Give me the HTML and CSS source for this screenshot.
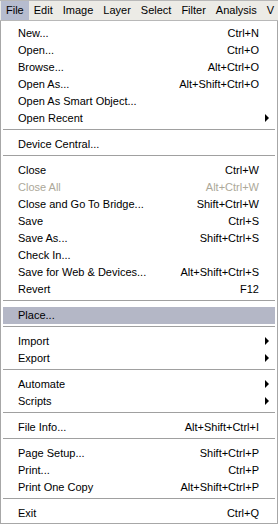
FILE: index.html
```html
<!DOCTYPE html>
<html lang="en">
  <head>
    <meta charset="UTF-8" />
    <title>File Menu</title>
    <link rel="stylesheet" href="styles.css">
  </head>
  <body>
    <div class="menubar">
      <span class="top-item open">File</span>
      <span class="top-item">Edit</span>
      <span class="top-item">Image</span>
      <span class="top-item">Layer</span>
      <span class="top-item">Select</span>
      <span class="top-item">Filter</span>
      <span class="top-item">Analysis</span>
      <span class="top-item">V</span>
    </div>

    <div class="menu">
      <div class="item"><span>New...</span><span class="key">Ctrl+N</span><span class="sub"></span></div>
      <div class="item"><span>Open...</span><span class="key">Ctrl+O</span><span class="sub"></span></div>
      <div class="item"><span>Browse...</span><span class="key">Alt+Ctrl+O</span><span class="sub"></span></div>
      <div class="item"><span>Open As...</span><span class="key">Alt+Shift+Ctrl+O</span><span class="sub"></span></div>
      <div class="item"><span>Open As Smart Object...</span><span class="key"></span><span class="sub"></span></div>
      <div class="item"><span>Open Recent</span><span class="key"></span><span class="sub arrow"></span></div>
      <div class="sep"></div>
      <div class="item"><span>Device Central...</span><span class="key"></span><span class="sub"></span></div>
      <div class="sep"></div>
      <div class="item"><span>Close</span><span class="key">Ctrl+W</span><span class="sub"></span></div>
      <div class="item disabled"><span>Close All</span><span class="key">Alt+Ctrl+W</span><span class="sub"></span></div>
      <div class="item"><span>Close and Go To Bridge...</span><span class="key">Shift+Ctrl+W</span><span class="sub"></span></div>
      <div class="item"><span>Save</span><span class="key">Ctrl+S</span><span class="sub"></span></div>
      <div class="item"><span>Save As...</span><span class="key">Shift+Ctrl+S</span><span class="sub"></span></div>
      <div class="item"><span>Check In...</span><span class="key"></span><span class="sub"></span></div>
      <div class="item"><span>Save for Web &amp; Devices...</span><span class="key">Alt+Shift+Ctrl+S</span><span class="sub"></span></div>
      <div class="item"><span>Revert</span><span class="key">F12</span><span class="sub"></span></div>
      <div class="sep"></div>
      <div class="item hover"><span>Place...</span><span class="key"></span><span class="sub"></span></div>
      <div class="sep"></div>
      <div class="item"><span>Import</span><span class="key"></span><span class="sub arrow"></span></div>
      <div class="item"><span>Export</span><span class="key"></span><span class="sub arrow"></span></div>
      <div class="sep"></div>
      <div class="item"><span>Automate</span><span class="key"></span><span class="sub arrow"></span></div>
      <div class="item"><span>Scripts</span><span class="key"></span><span class="sub arrow"></span></div>
      <div class="sep"></div>
      <div class="item"><span>File Info...</span><span class="key">Alt+Shift+Ctrl+I</span><span class="sub"></span></div>
      <div class="sep"></div>
      <div class="item"><span>Page Setup...</span><span class="key">Shift+Ctrl+P</span><span class="sub"></span></div>
      <div class="item"><span>Print...</span><span class="key">Ctrl+P</span><span class="sub"></span></div>
      <div class="item"><span>Print One Copy</span><span class="key">Alt+Shift+Ctrl+P</span><span class="sub"></span></div>
      <div class="sep"></div>
      <div class="item"><span>Exit</span><span class="key">Ctrl+Q</span><span class="sub"></span></div>
    </div>
  </body>
</html>
```

FILE: styles.css
```css
body {
  margin: 0;
  padding: 0;
  width: 278px;
  font-family: "Liberation Sans", Arial, sans-serif;
  font-size: 11px;
  color: #000;
  background-color: #ffffff;
}

.menubar {
  display: flex;
  height: 21px;
  background-color: #ecebe6;
  border-top: 1px solid #b8b8b8;
  border-bottom: 1px solid #b8b8b8;
  box-sizing: border-box;
  white-space: nowrap;
  overflow: hidden;
}

.top-item {
  padding: 0 5px;
  line-height: 19px;
}

.top-item.open {
  background-color: #b6bccf;
  margin-left: 1px;
}

.menu {
  border: 1px solid #a7a7a7;
  border-top: none;
  padding: 4px 2px 0;
  height: 503px;
  box-sizing: border-box;
  background-color: #ffffff;
}

.item {
  display: flex;
  height: 17px;
  line-height: 17px;
  padding-left: 15px;
}

.item span:first-child {
  flex: 1;
}

.key {
  text-align: right;
}

.sub {
  width: 16px;
  position: relative;
}

.arrow::after {
  content: "";
  position: absolute;
  left: 6px;
  top: 4px;
  border-left: 4px solid #000;
  border-top: 4px solid transparent;
  border-bottom: 4px solid transparent;
}

.disabled {
  color: #aca899;
}

.hover {
  background-color: #b4b7c6;
}

.sep {
  height: 1px;
  margin: 2px 0 6px;
  background-color: #a0a0a0;
}
```
